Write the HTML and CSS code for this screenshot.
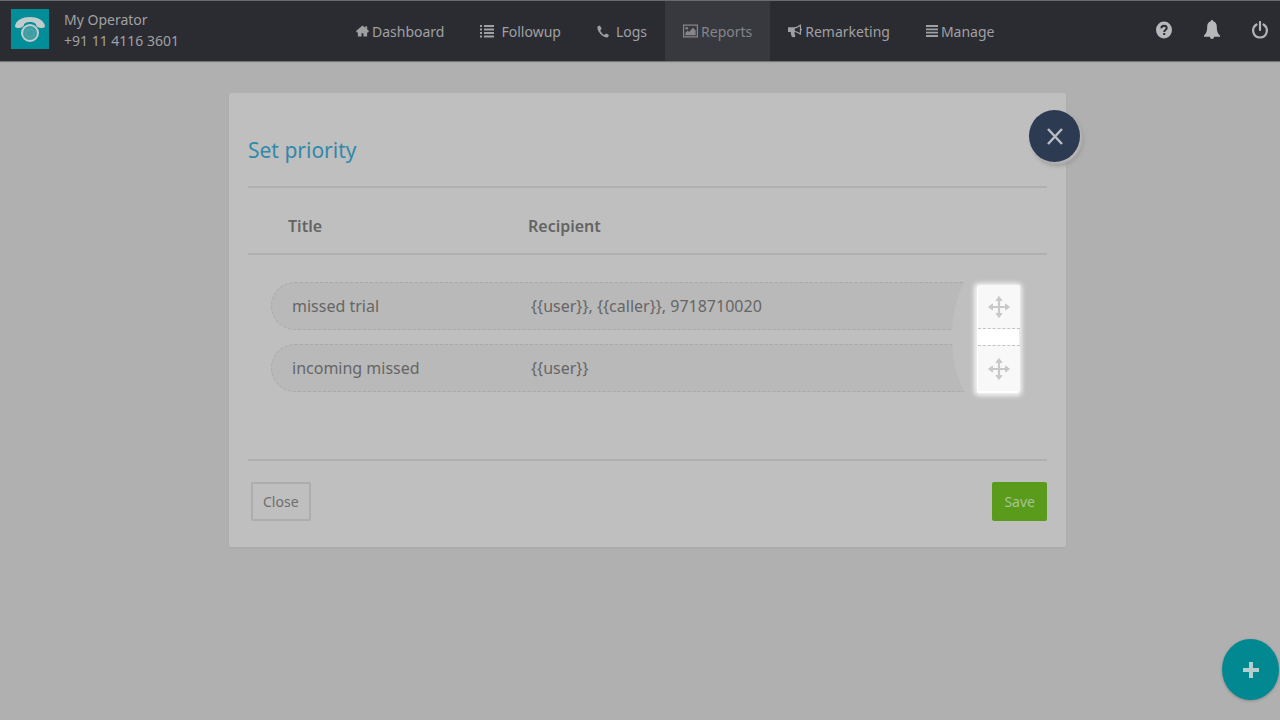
FILE: index.html
```html
<!DOCTYPE html>
<html lang="en">
<head>
    <meta charset="UTF-8">
    <meta name="viewport" content="width=device-width, initial-scale=1.0">
    <title>My Operator - Set priority</title>
    <link rel="stylesheet" href="styles.css">
</head>
<body>
    <header class="topbar">
        <div class="brand">
            <svg class="logo" viewBox="0 0 38 40" aria-hidden="true">
                <rect width="38" height="40" fill="#018e98"/>
                <path d="M4 17C5 11 12 8 19 8s14 3 15 9c0 1-1 2-3 2-4 0-5-1-6-3 0-2-3-3-6-3s-6 1-6 3c-1 2-2 3-6 3-2 0-3-1-3-2z" fill="#c2cccc"/>
                <circle cx="19" cy="24" r="8" fill="#3d9da3" stroke="#c2cccc" stroke-width="2"/>
                <circle cx="19" cy="24" r="4" fill="none" stroke="#55a6ab" stroke-width="1"/>
            </svg>
            <div class="account">
                <div>My Operator</div>
                <div>+91 11 4116 3601</div>
            </div>
        </div>
        <nav class="menu">
            <a href="#">
                <svg width="13" height="12" viewBox="0 0 14 12"><path d="M7 0L0 6l1 1.500h1V12h4V8.500h2V12h4V7.500h1L14 6l-2-1.800V1h-2v1.500z"/></svg>
                <span>Dashboard</span>
            </a>
            <a href="#" class="wide">
                <svg width="14" height="14" viewBox="0 0 14 14"><path d="M4 1h10v2H4zM4 4.500h10v2H4zM4 8h10v2H4zM4 11.500h10v2H4zM0 1h2v2H0zM0 4.500h2v2H0zM0 8h2v2H0zM0 11.500h2v2H0z"/></svg>
                <span>Followup</span>
            </a>
            <a href="#" class="wide">
                <svg width="12" height="13" viewBox="0 0 12 13"><path d="M2.500.5L.5 1.500C-.5 6 6 13 10.500 12.500l1.500-2c0-.5-2.500-2-3-2L7.300 10C5.500 9 4 7.200 3.200 5.400L4.500 4c0-.8-1.200-3.500-2-3.500z"/></svg>
                <span>Logs</span>
            </a>
            <a href="#" class="active">
                <svg width="15" height="14" viewBox="0 0 16 14"><path fill-rule="evenodd" d="M0 0h16v14H0zM1.300 1.300v11.400h13.400V1.300zM2.500 11.500V9L5 6.500l1.500 1.500 4-4.500 3 3v5z"/><circle cx="4" cy="4" r="1.400"/></svg>
                <span>Reports</span>
            </a>
            <a href="#">
                <svg width="14" height="14" viewBox="0 0 15 14"><path fill-rule="evenodd" d="M0 3h6c3 0 5-1.500 7-3h1v4.200c1.300.3 1.300 2.300 0 2.600V11h-1c-2-1.500-4-2.700-6-3 .2 1.500-.2 2 1 4.500-.8 1.500-3 1.300-4 .5C3.500 11.500 3 10 3 8H0zM7.300 4.300v2.600c2 .2 3.700 1.100 5.400 2.300V1.900C11 3.200 9.300 4.100 7.300 4.300z"/></svg>
                <span>Remarketing</span>
            </a>
            <a href="#">
                <svg width="12" height="12" viewBox="0 0 12 12"><path d="M0 0h12v2H0zM0 3.400h12v1.900H0zM0 6.700h12v1.900H0zM0 10h12v2H0z"/></svg>
                <span>Manage</span>
            </a>
        </nav>
        <div class="tools">
            <button type="button" aria-label="Help">
                <svg width="16" height="18" viewBox="0 0 16 18"><ellipse cx="8" cy="9" rx="8" ry="8.500"/><path d="M5.300 7.200C5.400 3.700 10.700 3.900 10.700 7c0 2-2.500 1.900-2.500 3.900M8.200 12v2" fill="none" stroke="#2b2c32" stroke-width="2"/></svg>
            </button>
            <button type="button" aria-label="Notifications">
                <svg width="16" height="20" viewBox="0 0 16 20"><path d="M8 0c.8 0 1.200.6 1.200 1.300 2.500.7 3.600 2.700 3.600 5.200 0 5 1 7 3.200 9v1.200H10c0 3-4 3-4 0H0v-1.200c2.200-2 3.200-4 3.200-9 0-2.500 1.100-4.500 3.600-5.200C6.800.6 7.200 0 8 0z"/></svg>
            </button>
            <button type="button" aria-label="Log out">
                <svg width="16" height="18" viewBox="0 0 16 18"><path d="M4.500 3.500C-1 7 .5 16.500 8 16.500s9-9.500 3.500-13M8 1v8" fill="none" stroke="#b4b4b6" stroke-width="2.200" stroke-linecap="round"/></svg>
            </button>
        </div>
    </header>

    <main class="page">
        <section class="panel">
            <button type="button" class="dismiss" aria-label="Dismiss">
                <svg width="16" height="17" viewBox="0 0 16 17"><path d="M1 1l14 15M15 1L1 16" fill="none" stroke="#b9bdc2" stroke-width="2.500"/></svg>
            </button>
            <h1>Set priority</h1>
            <table class="priority">
                <thead>
                    <tr><th>Title</th><th>Recipient</th></tr>
                </thead>
                <tbody>
                    <tr>
                        <td>missed trial</td>
                        <td class="recipient">{{user}}, {{caller}}, 9718710020</td>
                        <td class="handle">
                            <button type="button" aria-label="Move missed trial">
                                <svg width="24" height="24" viewBox="0 0 24 24"><path class="arms" d="M12 3v18M3 12h18"/><path class="heads" d="M12 1.500l3 4H9zM12 22.500l-3-4h6zM1.500 12l4-3v6zM22.500 12l-4 3V9z"/></svg>
                            </button>
                        </td>
                    </tr>
                    <tr>
                        <td>incoming missed</td>
                        <td class="recipient">{{user}}</td>
                        <td class="handle">
                            <button type="button" aria-label="Move incoming missed">
                                <svg width="24" height="24" viewBox="0 0 24 24"><path class="arms" d="M12 3v18M3 12h18"/><path class="heads" d="M12 1.500l3 4H9zM12 22.500l-3-4h6zM1.500 12l4-3v6zM22.500 12l-4 3V9z"/></svg>
                            </button>
                        </td>
                    </tr>
                </tbody>
            </table>
            <div class="actions">
                <button type="button" class="btn">Close</button>
                <button type="button" class="btn save">Save</button>
            </div>
        </section>
    </main>

    <button type="button" class="add" aria-label="Add">
        <svg width="16" height="16" viewBox="0 0 16 16"><path d="M8 0v16M0 8h16" stroke="#b5cdcf" stroke-width="4"/></svg>
    </button>
</body>
</html>
```

FILE: styles.css
```css
* {
    box-sizing: border-box;
}
body {
    margin: 0;
    min-height: 100vh;
    background: #b0b0b0;
    font-family: "Noto Sans", "Open Sans", sans-serif;
    font-size: 14px;
    color: #666;
}
button {
    font: inherit;
    padding: 0;
    border: 0;
    background: none;
    cursor: pointer;
}
svg {
    display: block;
}

/* top bar */
.topbar {
    display: flex;
    height: 61px;
    border-top: 1px solid #6b6b6d;
    background: #2b2c32;
    box-shadow: 0 1px 1px #77777a;
    color: #a0a0a2;
}
.brand {
    display: flex;
    flex: 0 0 338px;
    gap: 15px;
    padding: 8px 0 0 11px;
}
.logo {
    width: 38px;
    height: 40px;
}
.account {
    line-height: 21px;
}
.menu {
    display: flex;
}
.menu a {
    display: flex;
    align-items: center;
    gap: 3px;
    padding: 0 18px;
    color: #a0a0a2;
    text-decoration: none;
}
.menu a.wide {
    gap: 7px;
}
.menu a.active {
    background: #38393e;
    color: #85868a;
}
.menu svg {
    fill: currentColor;
}
.tools {
    display: flex;
    align-items: center;
    gap: 32px;
    margin-left: auto;
    padding: 0 12px 2px 0;
}
.tools svg {
    fill: #b8b8ba;
}

/* dialog */
.page {
    padding: 32px 214px 40px 229px;
}
.panel {
    position: relative;
    padding: 0 19px;
    background: #bfbfbf;
    border-radius: 2px;
    box-shadow: 0 1px 2px #a8a8a8;
}
.panel h1 {
    margin: 0;
    padding: 43px 0 22px;
    border-bottom: 2px solid #b0b0b0;
    font-size: 21px;
    font-weight: normal;
    line-height: 28px;
    color: #3189aa;
}
.dismiss {
    position: absolute;
    top: 17px;
    right: -14px;
    display: flex;
    align-items: center;
    justify-content: center;
    width: 51px;
    height: 52px;
    border-radius: 50%;
    background: #2c3a52;
    box-shadow: 2px 2px 2px #b8b8b8, 3px 4px 4px #999;
}

/* priority list */
.priority,
.priority thead,
.priority tbody {
    display: block;
}
.priority tr {
    display: flex;
    align-items: center;
}
.priority thead {
    padding: 25px 40px 13px;
    border-bottom: 2px solid #b0b0b0;
}
.priority th {
    flex: 0 0 240px;
    padding: 0;
    font-size: 16px;
    font-weight: 600;
    line-height: 27px;
    text-align: left;
    color: #646464;
}
.priority tbody {
    position: relative;
    padding: 27px 23px 67px;
    overflow: hidden;
}
.priority tbody tr {
    height: 48px;
    padding: 0 3px 0 20px;
    border: 1px dashed #a9a9a9;
    border-radius: 24px;
    background: #b9b9b9;
}
.priority tbody tr + tr {
    margin-top: 14px;
}
.priority td {
    flex: 0 0 239px;
    padding: 0;
    font-size: 16px;
}
.priority td.recipient {
    flex: 1;
}
/* lighter disc and the glow behind the drag handles */
.priority tbody::before {
    content: "";
    position: absolute;
    top: 0;
    right: 0;
    width: 95px;
    height: 164px;
    border-radius: 50% 0 0 50%;
    background: #bfbfbf;
}
.priority tbody::after {
    content: "";
    position: absolute;
    top: 31px;
    right: 28px;
    width: 42px;
    height: 107px;
    border-radius: 2px;
    background: #fff;
    box-shadow: 0 0 4px 3px #f2f2f2;
}
.priority td.handle {
    position: relative;
    z-index: 1;
    flex: 0 0 42px;
    display: flex;
    align-items: center;
    justify-content: center;
    height: 44px;
    background: #f8f8f8;
}
.priority tr:first-child .handle {
    align-self: flex-end;
    border-bottom: 1px dashed #c4c4c4;
}
.priority tr:last-child .handle {
    align-self: flex-start;
    height: 46px;
    border-top: 1px dashed #c4c4c4;
}
.handle .arms {
    stroke: #c9c9c9;
    stroke-width: 2.2;
}
.handle .heads {
    fill: #c9c9c9;
    stroke: #c9c9c9;
    stroke-linejoin: round;
}

/* footer buttons */
.actions {
    display: flex;
    justify-content: space-between;
    padding: 21px 0 26px 3px;
    border-top: 2px solid #b0b0b0;
}
.btn {
    height: 39px;
    padding: 0 10px;
    border: 2px solid #adadad;
    border-radius: 2px;
    color: #6e6e6e;
}
.btn.save {
    border-color: #5a9b1c;
    background: #5a9b1c;
    color: #a9c493;
}

.add {
    position: fixed;
    right: 1px;
    bottom: 20px;
    display: flex;
    align-items: center;
    justify-content: center;
    width: 57px;
    height: 61px;
    border-radius: 50%;
    background: #018891;
    box-shadow: 0 1px 3px #888;
}
```
